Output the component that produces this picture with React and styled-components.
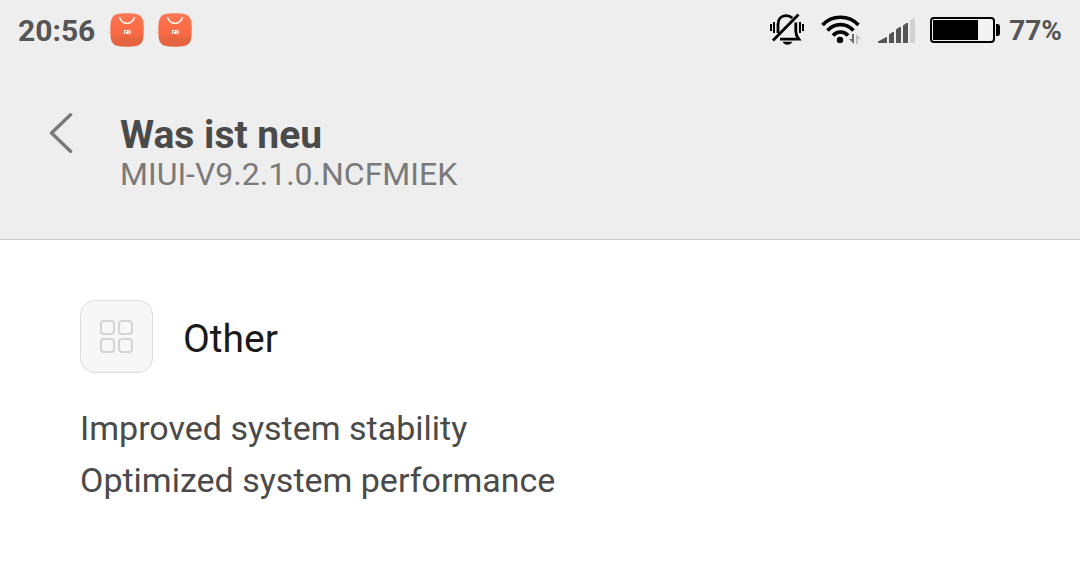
import React from "react";
import styled, { createGlobalStyle } from "styled-components";

const GlobalStyle = createGlobalStyle`
  * { box-sizing: border-box; }
  body {
    margin: 0;
    background: #ffffff;
    font-family: Roboto, "Liberation Sans", sans-serif;
  }
`;

const TopArea = styled.div`
  background: #eeeeee;
  border-bottom: 1px solid #c8c8c8;
`;

const StatusBar = styled.div`
  display: flex;
  align-items: center;
  justify-content: space-between;
  height: 60px;
  padding: 0 18px;
`;

const StatusGroup = styled.div`
  display: flex;
  align-items: center;
  gap: ${(p) => p.$gap}px;
`;

const StatusText = styled.span`
  padding-top: 2px;
  color: #555555;
  font-size: ${(p) => p.$size}px;
  line-height: 36px;
  font-weight: 700;
`;

const Glyph = styled.svg`
  display: block;
  flex: none;
`;

const TitleBar = styled.header`
  display: flex;
  align-items: flex-start;
  gap: 40px;
  padding: 53px 40px 48px;
`;

const BackButton = styled.button`
  display: block;
  width: 40px;
  height: 40px;
  padding: 0;
  border: 0;
  background: none;
  cursor: pointer;
`;

const Title = styled.h1`
  margin: 0;
  color: #4a4a4a;
  font-size: 39px;
  line-height: 44px;
  font-weight: 700;
`;

const Version = styled.p`
  margin: 0;
  color: #7a7a7a;
  font-size: 32px;
  line-height: 34px;
`;

const Content = styled.main`
  padding: 60px 80px;
`;

const SectionHead = styled.div`
  display: flex;
  align-items: center;
  gap: 30px;
`;

const Tile = styled.div`
  display: grid;
  place-items: center;
  width: 73px;
  height: 73px;
  border: 1px solid #dcdcdc;
  border-radius: 15px;
  background: #f7f7f7;
`;

const SectionTitle = styled.h2`
  margin: 0;
  padding-top: 4px;
  color: #1a1a1a;
  font-size: 39px;
  line-height: 44px;
  font-weight: 400;
`;

const Changes = styled.ul`
  margin: 29px 0 0;
  padding: 0;
  list-style: none;
`;

const Change = styled.li`
  color: #4a4a4a;
  font-size: 34px;
  line-height: 52px;
`;

const StoreIcon = () => (
  <Glyph width="34" height="34" viewBox="0 0 34 34" aria-hidden="true">
    <defs>
      <linearGradient id="bag" x1="0" y1="0" x2="0" y2="1">
        <stop offset="0" stopColor="#ff7a58" />
        <stop offset="0.25" stopColor="#fd6f4a" />
        <stop offset="0.62" stopColor="#fa6b46" />
        <stop offset="0.78" stopColor="#e56442" />
        <stop offset="1" stopColor="#e76443" />
      </linearGradient>
    </defs>
    <path
      d="M17 .3C22 .3 27 .5 29.500 2.200C33 4.700 33.700 9 33.700 17S33 29.300 29.500 31.800C27 33.500 22 33.700 17 33.700S7 33.500 4.500 31.800C1 29.300.3 25 .3 17S1 4.700 4.500 2.200C7 .5 12 .3 17 .3Z"
      fill="url(#bag)"
    />
    <path d="M9.500 4C10.500 8 13.500 10.300 17 10.300s6.500-2.300 7.500-6.300" fill="none" stroke="#fff1ec" strokeWidth="1.500" />
    <path d="M14.500 21v-3.500h3V21M16.300 19v2" fill="none" stroke="#ffffff" strokeWidth="1" />
    <rect x="18" y="17" width="3" height="4" fill="#ffc4b3" />
  </Glyph>
);

const MutedIcon = () => (
  <Glyph width="34" height="34" viewBox="0 0 34 34" aria-hidden="true">
    <g fill="none" stroke="#000000">
      <path d="M8 20V11.500C8 6 11.500 2.700 16 2.700c2.700 0 4.700.8 6.300 2.300" strokeWidth="2.800" />
      <path d="M25.800 9.500V18.500c0 3 1 5 3 7.700H10" strokeWidth="2.800" />
      <path d="M3 27.500L28.500 1.500" strokeWidth="2.800" />
      <path d="M1 11v7M4 9v11M30 9v11M33 11v7" strokeWidth="2" />
    </g>
    <path d="M12.700 28.700h9.600c-1.500 4-8 4-9.600 0Z" />
  </Glyph>
);

const WifiIcon = () => (
  <Glyph width="40" height="30" viewBox="0 0 40 30" aria-hidden="true">
    <g fill="none" stroke="#000000" strokeWidth="3.600">
      <path d="M1.500 10C11-.4 28-.4 37.500 10" />
      <path d="M6.500 15.500C13.500 7.600 25.500 7.600 32.500 15.500" />
      <path d="M12 20.500C16 15.800 23 15.800 27 20.500" />
    </g>
    <circle cx="19" cy="25" r="3.200" />
    <path d="M33 19v10l-5-5h3V19Z" fill="#6c6c6c" />
    <path d="M35 29V19l5 5h-3v5Z" fill="#c0c0c0" />
  </Glyph>
);

const SignalIcon = () => (
  <Glyph width="37" height="26" viewBox="0 0 37 26" aria-hidden="true">
    <g fill="#555555">
      <path d="M0 26v-1.500L7.500 20.500L9 20v6Z" />
      <path d="M11 26v-8.500l3.500-2.500H16v11Z" />
      <path d="M18 26V12.500L21.500 10H23v16Z" />
      <path d="M25 26V8.500L28.500 6H30v20Z" />
    </g>
    <path d="M32 26V4q1-2.500 5-3v25Z" fill="#d2d2d2" />
  </Glyph>
);

const BatteryIcon = () => (
  <Glyph width="70" height="26" viewBox="0 0 70 26" aria-hidden="true">
    <rect x="1" y="1" width="63" height="24" rx="3" fill="#f3f3f3" stroke="#000000" strokeWidth="2" />
    <rect x="3" y="3" width="45" height="20" />
    <path d="M66 7h1.500Q70 7 70 10v6q0 3-2.500 3H66Z" />
  </Glyph>
);

const ChevronIcon = () => (
  <Glyph width="40" height="40" viewBox="0 0 40 40" aria-hidden="true">
    <path
      d="M30.500 1.800L11.500 20L30.500 38.200"
      fill="none"
      stroke="#7a7a7a"
      strokeWidth="3.400"
      strokeLinecap="round"
      strokeLinejoin="round"
    />
  </Glyph>
);

const GridIcon = () => (
  <Glyph width="33" height="33" viewBox="0 0 33 33" aria-hidden="true">
    <g fill="none" stroke="#d4d4d4" strokeWidth="2">
      <rect x="1" y="1" width="13" height="13" rx="3" />
      <rect x="19" y="1" width="13" height="13" rx="3" />
      <rect x="1" y="19" width="13" height="13" rx="3" />
      <rect x="19" y="19" width="13" height="13" rx="3" />
    </g>
  </Glyph>
);

const changes = ["Improved system stability", "Optimized system performance"];

export default function App() {
  return (
    <>
      <GlobalStyle />
      <TopArea>
        <StatusBar>
          <StatusGroup $gap={15}>
            <StatusText $size={30}>20:56</StatusText>
            <StatusGroup $gap={14}>
              <StoreIcon />
              <StoreIcon />
            </StatusGroup>
          </StatusGroup>
          <StatusGroup $gap={17}>
            <MutedIcon />
            <WifiIcon />
            <StatusGroup $gap={15}>
              <SignalIcon />
              <StatusGroup $gap={9}>
                <BatteryIcon />
                <StatusText $size={28}>77%</StatusText>
              </StatusGroup>
            </StatusGroup>
          </StatusGroup>
        </StatusBar>
        <TitleBar>
          <BackButton type="button" aria-label="Zurück">
            <ChevronIcon />
          </BackButton>
          <div>
            <Title>Was ist neu</Title>
            <Version>MIUI-V9.2.1.0.NCFMIEK</Version>
          </div>
        </TitleBar>
      </TopArea>
      <Content>
        <SectionHead>
          <Tile>
            <GridIcon />
          </Tile>
          <SectionTitle>Other</SectionTitle>
        </SectionHead>
        <Changes>
          {changes.map((text) => (
            <Change key={text}>{text}</Change>
          ))}
        </Changes>
      </Content>
    </>
  );
}
